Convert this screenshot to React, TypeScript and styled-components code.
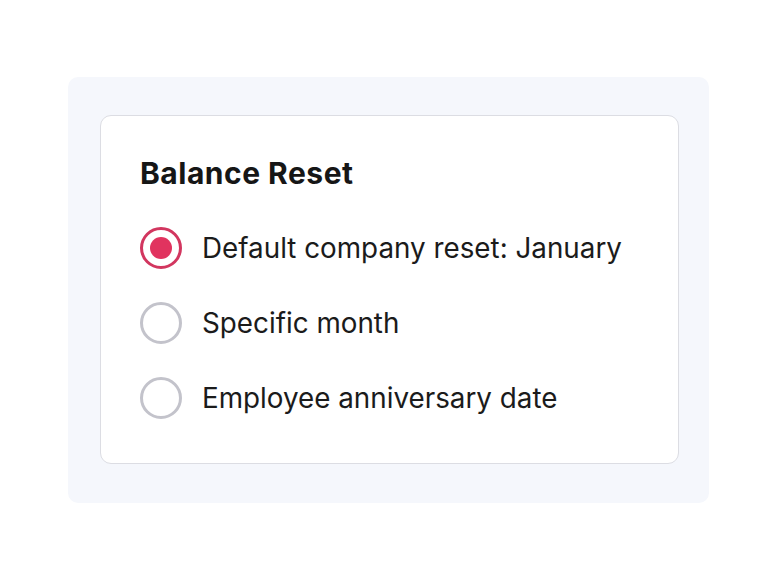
import React, { useState } from 'react';
import styled, { createGlobalStyle } from 'styled-components';

const GlobalStyle = createGlobalStyle`
  html, body {
    margin: 0;
    padding: 0;
    background: #ffffff;
  }
  body {
    font-family: Inter, "Noto Sans", "Liberation Sans", sans-serif;
    -webkit-font-smoothing: antialiased;
  }
`;

const Page = styled.div`
  width: 768px;
  height: 588px;
  box-sizing: border-box;
  padding: 77px 0 0 68px;
`;

const Panel = styled.div`
  width: 641px;
  height: 426px;
  box-sizing: border-box;
  padding: 38px 30px 0 32px;
  background: #f5f7fc;
  border-radius: 10px;
`;

const Card = styled.div`
  height: 349px;
  box-sizing: border-box;
  padding: 39px 38px 0 39px;
  background: #ffffff;
  border: 1px solid #dcdde3;
  border-radius: 11px;
`;

const Title = styled.h2`
  margin: 0 0 36px 0;
  font-size: 30px;
  line-height: 36px;
  font-weight: 700;
  color: #161616;
  letter-spacing: 0.5px;
`;

const OptionList = styled.div`
  display: flex;
  flex-direction: column;
  gap: 33px;
`;

const OptionRow = styled.label`
  display: flex;
  align-items: center;
  gap: 20px;
  cursor: pointer;
`;

const Radio = styled.span<{ $checked: boolean }>`
  width: 42px;
  height: 42px;
  box-sizing: border-box;
  flex: none;
  border-radius: 50%;
  border: 3px solid ${(p) => (p.$checked ? '#d2365f' : '#c3c3cb')};
  display: grid;
  place-items: center;

  &::after {
    content: '';
    width: 22px;
    height: 22px;
    border-radius: 50%;
    background: #e1335f;
    display: ${(p) => (p.$checked ? 'block' : 'none')};
  }
`;

const OptionText = styled.span`
  font-size: 27.8px;
  line-height: 32px;
  color: #1b1b1b;
  font-weight: 400;
`;

const options = [
  'Default company reset: January',
  'Specific month',
  'Employee anniversary date',
];

export default function App() {
  const [selected, setSelected] = useState(0);

  return (
    <>
      <GlobalStyle />
      <Page>
        <Panel>
          <Card>
            <Title>Balance Reset</Title>
            <OptionList>
              {options.map((label, i) => (
                <OptionRow key={label} onClick={() => setSelected(i)}>
                  <Radio $checked={selected === i} />
                  <OptionText>{label}</OptionText>
                </OptionRow>
              ))}
            </OptionList>
          </Card>
        </Panel>
      </Page>
    </>
  );
}
